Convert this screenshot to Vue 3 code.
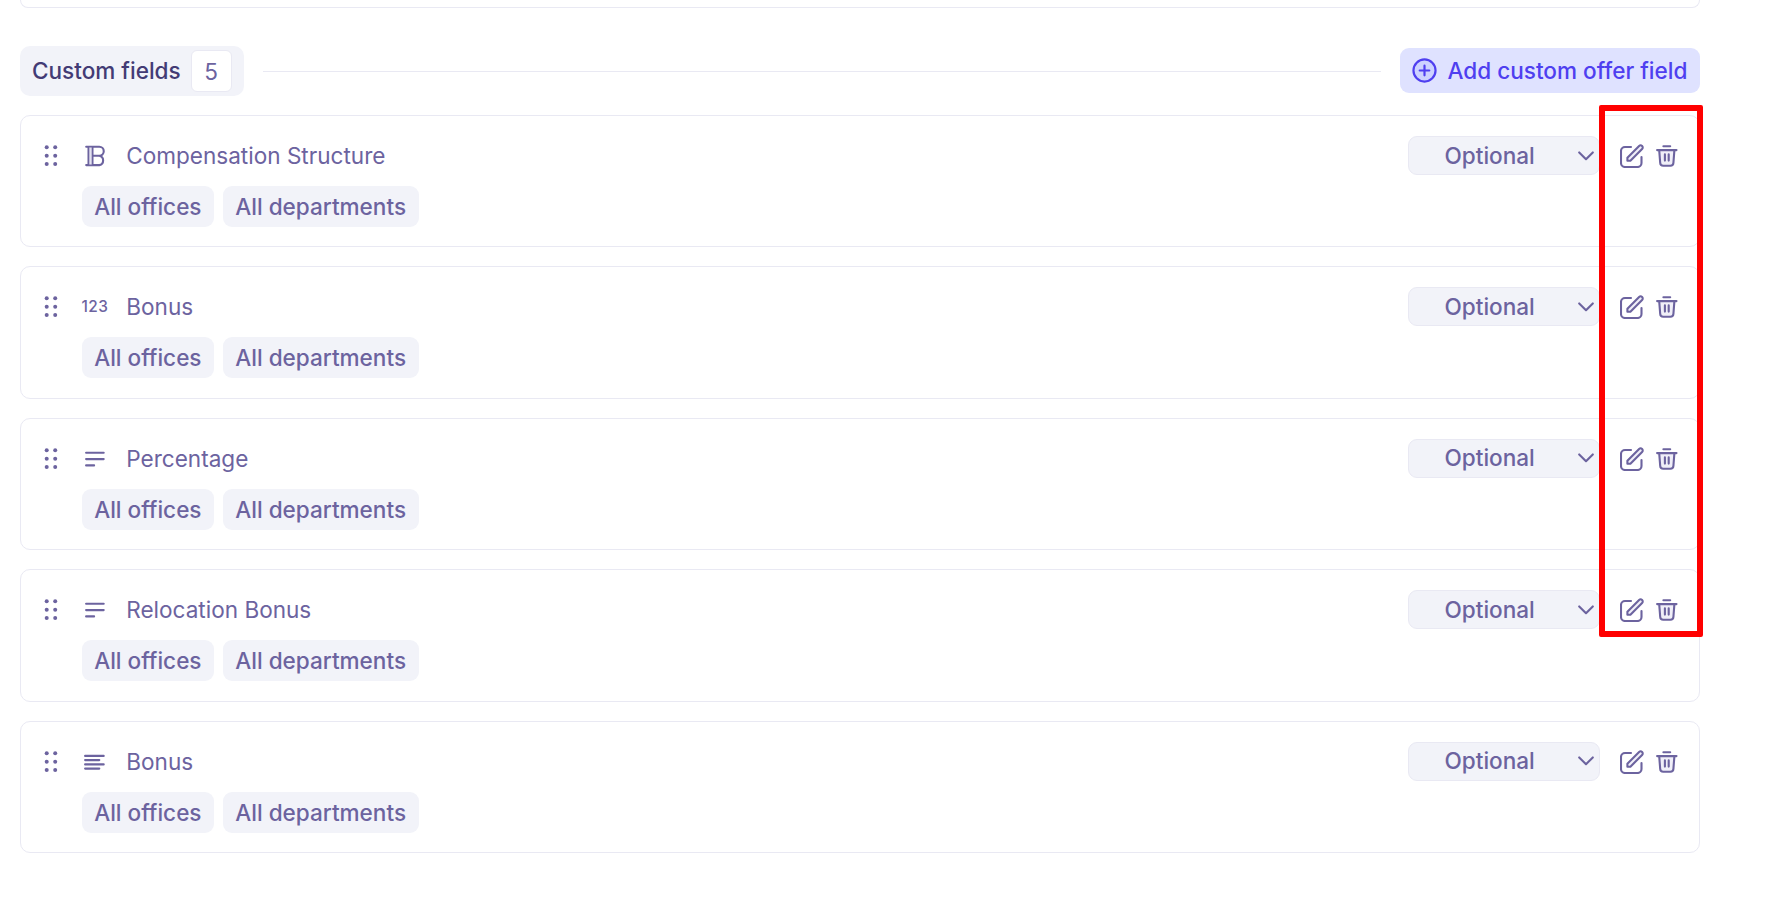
<script setup>
const fields = [
  { id: 1, name: 'Compensation Structure', type: 'bold' },
  { id: 2, name: 'Bonus', type: 'number' },
  { id: 3, name: 'Percentage', type: 'short' },
  { id: 4, name: 'Relocation Bonus', type: 'short' },
  { id: 5, name: 'Bonus', type: 'long' },
]
const scopes = ['All offices', 'All departments']
</script>

<template>
  <main class="page">
    <div class="previous-card"></div>

    <header class="section-head">
      <div class="section-title">
        <span class="section-name">Custom fields</span>
        <span class="count">{{ fields.length }}</span>
      </div>
      <div class="rule"></div>
      <button class="add" type="button">
        <svg class="add-icon" viewBox="0 0 24 24">
          <circle cx="12" cy="12" r="10.6" fill="#cdd2ff" />
          <path d="M12 7.4v9.2M7.4 12h9.2" />
        </svg>
        <span class="add-label">Add custom offer field</span>
      </button>
    </header>

    <section class="list">
      <article v-for="field in fields" :key="field.id" class="card">
        <div class="row">
          <svg class="grip" viewBox="0 0 14 22">
            <circle v-for="n in 6" :key="n" :cx="n % 2 ? 2.7 : 11.2" :cy="2.3 + 8.4 * Math.floor((n - 1) / 2)" r="2" />
          </svg>
          <span class="type">
            <svg v-if="field.type === 'bold'" class="glyph" viewBox="0 0 28 24">
              <path d="M5.2 2.8H18.3a4.3 4.3 0 0 1 0 8.9H11.8M18.3 11.7a4.8 4.8 0 0 1 0 9.4H5.2M7.6 2.8v18.3M11.4 2.8v18.3" />
              <path class="fill" d="M7.6 2.8h3.8v18.3H7.6z" />
            </svg>
            <span v-else-if="field.type === 'number'" class="digits">123</span>
            <svg v-else-if="field.type === 'short'" class="glyph" viewBox="0 0 28 24">
              <path d="M5.1 5.8h17.6M5.1 12.1h17.6M5.1 18.4h8" />
            </svg>
            <svg v-else class="glyph" viewBox="0 0 28 24">
              <path d="M4.1 5.9h18.6M4.1 10.1h14.2M4.1 14.4h18.6M4.1 18.6h14.2" />
            </svg>
          </span>
          <span class="name">{{ field.name }}</span>
          <div class="select">
            <span class="value">Optional</span>
            <svg class="chevron" viewBox="0 0 16 10"><path d="M1.2 1.4 8 8.2l6.8-6.8" /></svg>
          </div>
          <svg class="edit" viewBox="0 0 24 24">
            <path d="M11 3H5a4 4 0 0 0-4 4v12a4 4 0 0 0 4 4h12.5a4 4 0 0 0 4-4v-6" />
            <path class="tint" d="M7.4 16.7v-3L19.1 2a2.1 2.1 0 0 1 3 3L10.4 16.7z" />
          </svg>
          <svg class="trash" viewBox="0 0 22 22">
            <path class="tint" d="M3.2 5.1 4.2 18a3 3 0 0 0 3 2.8h7.2a3 3 0 0 0 3-2.8l1-12.9" />
            <path d="M1.1 5.1h19.4M7.4 1.3h6.8M8.9 9.4v6.2M12.7 9.4v6.2" />
          </svg>
        </div>
        <div class="chips">
          <span v-for="scope in scopes" :key="scope" class="chip">{{ scope }}</span>
        </div>
      </article>
    </section>

    <div class="highlight"></div>
  </main>
</template>

<style>
body {
  background: #fff;
}
</style>

<style scoped>
.page {
  position: relative;
  box-sizing: border-box;
  width: 1772px;
  height: 904px;
  padding: 0 72px 0 20px;
  overflow: hidden;
  background: #fff;
  color: #6c639f;
  font-family: Inter, sans-serif;
  font-size: 22.55px;
  line-height: 28px;
}
.page * {
  box-sizing: border-box;
}
svg {
  display: block;
  flex: none;
  fill: none;
  stroke: currentColor;
  stroke-width: 2.1;
  stroke-linecap: round;
  stroke-linejoin: round;
}
.previous-card {
  height: 8px;
  border: 1px solid #e9e9f3;
  border-top: 0;
  border-radius: 0 0 10px 10px;
}
.section-head {
  display: flex;
  align-items: center;
  height: 50px;
  margin-top: 38px;
}
.section-title {
  display: flex;
  align-items: center;
  width: 224px;
  height: 50px;
  padding-left: 12px;
  border-radius: 10px;
  background: #f2f3f9;
}
.section-name {
  width: 159px;
  color: #433b75;
  font-weight: 530;
  white-space: nowrap;
}
.count {
  width: 41px;
  height: 42px;
  padding-right: 1px;
  border: 1px solid #e9e9f3;
  border-radius: 6px;
  background: #fff;
  line-height: 41px;
  text-align: center;
}
.rule {
  flex: 1;
  height: 1px;
  margin: 0 19px;
  background: #e9e9f3;
}
.add {
  display: flex;
  align-items: center;
  width: 300px;
  height: 45px;
  margin-bottom: 1px;
  padding: 0 0 0 12px;
  border: 0;
  border-radius: 9px;
  background: #dfe2ff;
  color: #4f3ff0;
  font: inherit;
  font-weight: 520;
}
.add-icon {
  width: 25px;
  height: 25px;
  margin-right: 10.5px;
}
.add-label {
  padding-top: 1px;
  white-space: nowrap;
}
.list {
  display: flex;
  flex-direction: column;
  gap: 19.2px;
  margin-top: 19px;
}
.card {
  height: 132.3px;
  padding: 20px 20px 0 21px;
  border: 1px solid #e9e9f3;
  border-radius: 10px;
}
.row {
  display: flex;
  align-items: center;
  height: 39px;
}
.grip {
  width: 14px;
  height: 22px;
  margin-left: 2px;
  fill: currentColor;
  stroke: none;
}
.type {
  display: flex;
  justify-content: center;
  width: 28px;
  margin-left: 23px;
}
.glyph {
  width: 28px;
  height: 24px;
}
.glyph .fill {
  fill: #e4e2f0;
  stroke-width: 1.4;
}
.digits {
  font-size: 15.4px;
  font-weight: 500;
  line-height: 20px;
  letter-spacing: 0.5px;
}
.name {
  flex: 1;
  margin-left: 17.3px;
  padding-top: 1px;
  white-space: nowrap;
}
.select {
  display: flex;
  align-items: center;
  width: 192px;
  height: 39px;
  padding-left: 35.5px;
  border: 1px solid #e9e9f3;
  border-radius: 9px;
  background: #f2f3f9;
  font-weight: 530;
}
.value {
  width: 133.5px;
}
.chevron {
  width: 16px;
  height: 10px;
}
.edit {
  width: 24px;
  height: 24px;
  margin-left: 20px;
}
.trash {
  width: 22px;
  height: 22px;
  margin-left: 12px;
  margin-right: 1px;
}
.grip,
.glyph,
.edit,
.trash {
  margin-top: 0.5px;
}
.tint {
  fill: #f0eff8;
}
.chips {
  display: flex;
  gap: 9px;
  margin: 11px 0 0 40px;
}
.chip {
  height: 41px;
  padding: 0 12.6px 0 12.2px;
  border-radius: 9px;
  background: #f2f3f9;
  font-weight: 530;
  line-height: 42px;
  white-space: nowrap;
}
/* Outline drawn over the row actions */
.highlight {
  position: absolute;
  top: 105px;
  left: 1599px;
  width: 104px;
  height: 532px;
  border: 6px solid #f00;
  border-radius: 2px;
}
</style>
